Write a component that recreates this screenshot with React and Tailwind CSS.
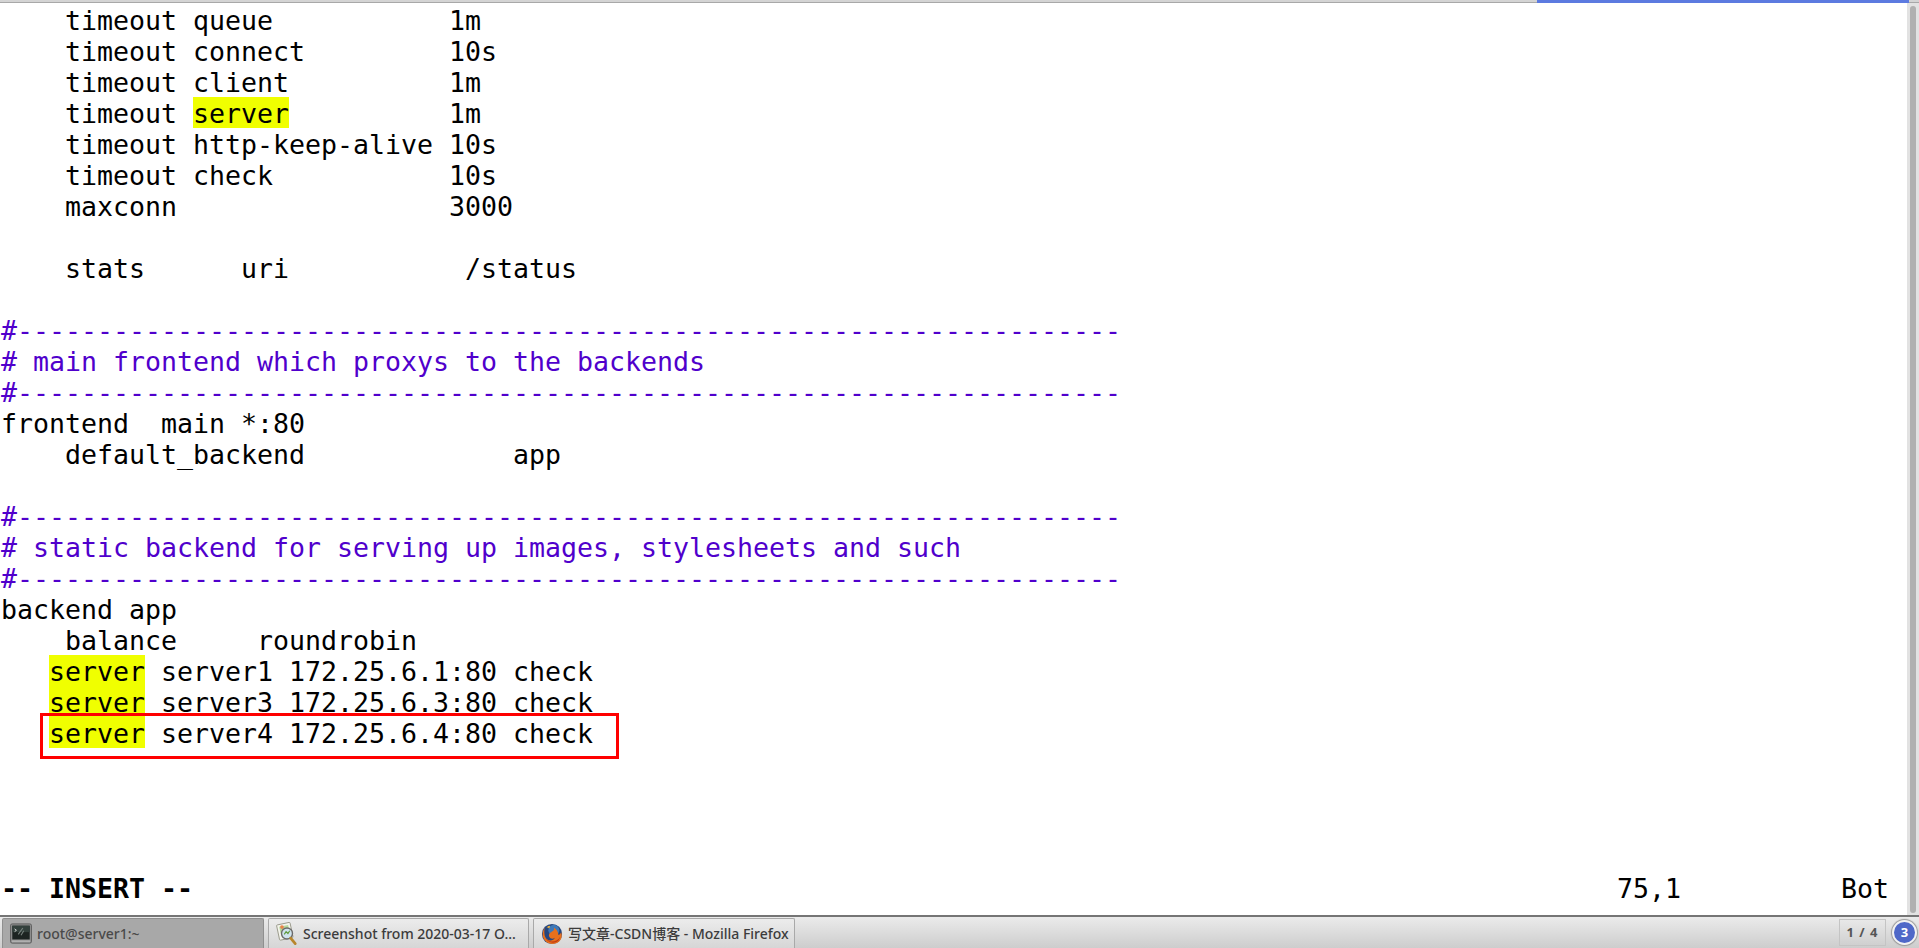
const DASHES = "#---------------------------------------------------------------------";

const LINES = [
  "    timeout queue           1m",
  "    timeout connect         10s",
  "    timeout client          1m",
  ["    timeout ", "server", "          1m"],
  "    timeout http-keep-alive 10s",
  "    timeout check           10s",
  "    maxconn                 3000",
  "",
  "    stats      uri           /status",
  "",
  { c: DASHES },
  { c: "# main frontend which proxys to the backends" },
  { c: DASHES },
  "frontend  main *:80",
  "    default_backend             app",
  "",
  { c: DASHES },
  { c: "# static backend for serving up images, stylesheets and such" },
  { c: DASHES },
  "backend app",
  "    balance     roundrobin",
  ["   ", "server", " server1 172.25.6.1:80 check"],
  ["   ", "server", " server3 172.25.6.3:80 check"],
  ["   ", "server", " server4 172.25.6.4:80 check"],
  "",
  "",
  "",
  "",
];

function Line({ line }) {
  if (Array.isArray(line)) {
    return (
      <div className="h-[31px]">
        {line[0]}
        <span className="inline-block h-[31px] bg-[#f0ff00]">{line[1]}</span>
        {line[2]}
      </div>
    );
  }
  if (line && line.c) {
    return <div className="h-[31px] text-[#5000cc]">{line.c}</div>;
  }
  return <div className="h-[31px]">{line}</div>;
}

function TerminalIcon() {
  return (
    <svg width="22" height="21" viewBox="0 0 24 22" className="shrink-0">
      <rect x="0.5" y="0.5" width="23" height="21" rx="2" fill="#8c8c8c" stroke="#5c5c5c" />
      <rect x="2.5" y="2.5" width="19" height="15" fill="#1d2422" />
      <rect x="2.5" y="2.5" width="19" height="7" fill="#33403c" />
      <path d="M5 6l2 1.5L5 9" fill="none" stroke="#e0e0e0" strokeWidth="1" />
      <path d="M9 12l5-7M12 13l3-5" stroke="#77827e" strokeWidth="1.2" />
      <rect x="2" y="18.5" width="20" height="2" fill="#b0b0b0" />
    </svg>
  );
}

function ViewerIcon() {
  return (
    <svg width="22" height="25" viewBox="0 0 24 26" className="shrink-0">
      <rect x="2" y="2" width="15" height="17" rx="1" fill="#f4f4ec" stroke="#9a9a8c" transform="rotate(-12 10 10)" />
      <rect x="4.5" y="4.5" width="10" height="7" fill="#b7d79a" transform="rotate(-12 10 10)" />
      <circle cx="6.5" cy="6" r="2" fill="#e8824a" />
      <circle cx="12" cy="13" r="6" fill="#cfe3ee" stroke="#6b6b6b" strokeWidth="1.5" />
      <path d="M9 14l2-3 2 2 2-3" fill="none" stroke="#5f9a3c" strokeWidth="1.3" />
      <path d="M16 18l5 6" stroke="#b8862c" strokeWidth="3" strokeLinecap="round" />
    </svg>
  );
}

function FirefoxIcon() {
  return (
    <svg width="22" height="24" viewBox="0 0 24 24" className="shrink-0">
      <circle cx="12" cy="12" r="11" fill="#26467f" />
      <circle cx="14" cy="8" r="6" fill="#3e78b8" />
      <path d="M4 5c-3 5-3 11 1 15 4 4 11 4 15 0 3-3 3-7 2-10-1 2-2 3-3 3 0-3-2-6-5-8 1 3-1 4-3 5-2 1-3 3-2 5 1 2 4 3 6 1-1 3-5 4-8 2-3-2-4-6-3-13z" fill="#e8701c" />
      <path d="M5 17c3 5 10 6 14 2 1-1 2-3 2-4-2 4-7 6-11 5-2-1-4-2-5-3z" fill="#c43c12" />
      <path d="M10 3c-2 0-3 1-4 2 1 0 2 0 3 1z" fill="#f5b335" />
    </svg>
  );
}

function TaskButton({ active, width, icon, children }) {
  const cls = active
    ? "bg-[#a8a8a8] border-[#8f8f8f] text-[#4a4a4a]"
    : "bg-gradient-to-b from-[#ececec] to-[#d6d6d6] border-[#a9a9a9] text-[#3c3c3c]";
  return (
    <div className={`flex h-full ${width} items-center gap-[5px] rounded-t-[2px] border border-b-0 pl-[7px] ${cls}`}>
      {icon}
      <span className="truncate">{children}</span>
    </div>
  );
}

export default function App() {
  return (
    <div className="relative flex h-[948px] w-[1919px] flex-col overflow-hidden bg-white">
      {/* window top edge */}
      <div className="flex h-[3px] shrink-0 border-b border-[#a8a8a8] bg-[#d4d4d4]">
        <div className="ml-[1537px] h-[3px] w-[372px] bg-[#5c7ae0]" />
      </div>

      <div className="flex min-h-0 flex-1">
        <div
          className="min-w-0 flex-1 whitespace-pre pl-px pt-px text-[26.58px] leading-[33px] text-black"
          style={{ fontFamily: '"DejaVu Sans Mono", monospace' }}
        >
          {LINES.map((line, i) => (
            <Line key={i} line={line} />
          ))}
          <div className="flex h-[31px]">
            <span className="w-[1616px] font-bold">-- INSERT --</span>
            <span className="w-[224px]">75,1</span>
            <span>Bot</span>
          </div>
        </div>
        {/* scrollbar */}
        <div className="flex w-[12px] shrink-0 justify-center bg-[#e2e2e2] pt-[3px] pb-[2px]">
          <div className="h-full w-[6px] rounded-full bg-[#b0b0b0]" />
        </div>
      </div>

      {/* taskbar */}
      <div
        className="flex h-[33px] shrink-0 items-end border-t-2 border-[#757575] bg-gradient-to-b from-[#ebebeb] to-[#cdcdcd] pl-[2px] text-[14px] font-medium"
        style={{ fontFamily: '"Noto Sans", "Noto Sans CJK SC", sans-serif' }}
      >
        <div className="flex h-[30px] gap-[4px]">
          <TaskButton active width="w-[262px]" icon={<TerminalIcon />}>root@server1:~</TaskButton>
          <TaskButton width="w-[261px]" icon={<ViewerIcon />}>Screenshot from 2020-03-17 O...</TaskButton>
          <TaskButton width="w-[262px]" icon={<FirefoxIcon />}>写文章-CSDN博客 - Mozilla Firefox</TaskButton>
        </div>
        <div className="ml-auto mr-[2px] flex h-full items-center gap-[6px]">
          <div className="flex h-[27px] w-[47px] items-center justify-center border border-[#c4c4c4] text-[13px] font-bold tracking-[1px] text-[#555555]">
            1 / 4
          </div>
          <div className="flex h-[25px] w-[25px] items-center justify-center rounded-full border-2 border-[#f2f2f2] bg-[#4f68c8] text-[13px] font-bold text-white shadow-[0_0_1px_1px_#9a9a9a]">
            3
          </div>
        </div>
      </div>

      {/* annotation drawn over the screenshot */}
      <div className="absolute left-[40px] top-[713px] h-[46px] w-[579px] border-[3px] border-[#ff0000]" />
    </div>
  );
}
